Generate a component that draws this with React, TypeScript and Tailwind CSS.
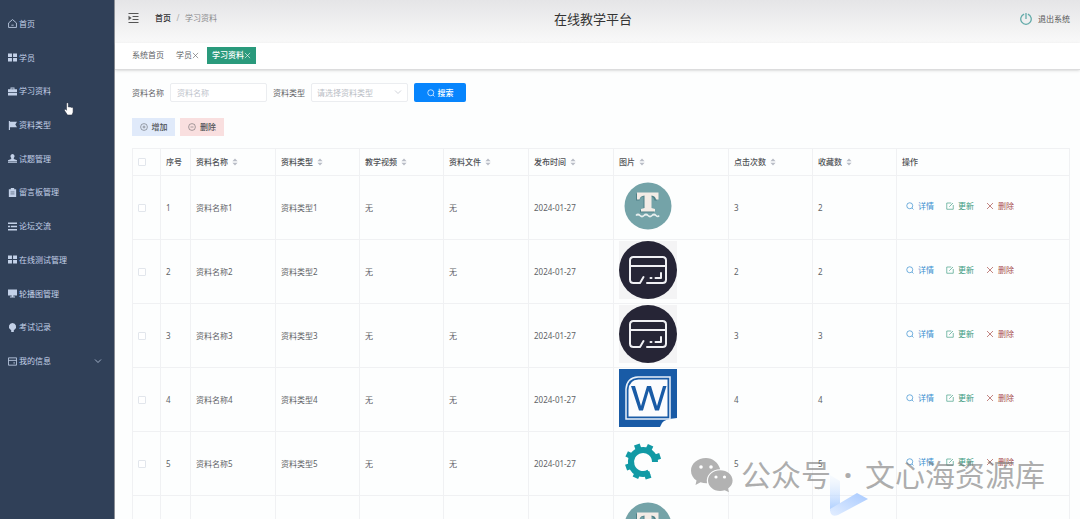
import type { ReactNode } from "react";

const menu = [
  { icon: "home", label: "首页" },
  { icon: "grid", label: "学员" },
  { icon: "case", label: "学习资料" },
  { icon: "flag", label: "资料类型" },
  { icon: "stamp", label: "试题管理" },
  { icon: "clipboard", label: "留言板管理" },
  { icon: "list", label: "论坛交流" },
  { icon: "grid", label: "在线测试管理" },
  { icon: "monitor", label: "轮播图管理" },
  { icon: "bulb", label: "考试记录" },
  { icon: "card", label: "我的信息", open: true },
];

const columns = [
  "资料名称",
  "资料类型",
  "教学视频",
  "资料文件",
  "发布时间",
  "图片",
  "点击次数",
  "收藏数",
];

const rows = [
  { id: 1, clicks: 3, likes: 2, picture: "text" },
  { id: 2, clicks: 2, likes: 2, picture: "card" },
  { id: 3, clicks: 3, likes: 3, picture: "card" },
  { id: 4, clicks: 4, likes: 4, picture: "word" },
  { id: 5, clicks: 5, likes: 5, picture: "gear" },
  { id: 6, clicks: 6, likes: 6, picture: "text" },
];

const shapes: Record<string, ReactNode> = {
  home: (
    <g fill="none" stroke="currentColor" strokeWidth="1.5">
      <path d="M1 7 8 1l7 6v8H1z" strokeLinejoin="round" />
      <path d="M6 11h4" />
    </g>
  ),
  grid: <path d="M0 1h7v6H0zM9 1h7v6H9zM0 9h7v6H0zM9 9h7v6H9z" />,
  case: <path d="M4.500 4V1h7v3H16v5H0V4zm1.500 0h4V2.500H6zM0 10h16v5H0z" />,
  flag: <path d="M1.500 0h2v1.500H16l-3 4.500 3 5H3.500v5h-2z" />,
  stamp: <path d="M8 0a4 4 0 0 1 2.300 7V9l5.700 2v2.500H0V11l5.700-2V7A4 4 0 0 1 8 0zM0 14.500h16V16H0z" />,
  clipboard: (
    <>
      <path d="M1.500 2H5V0h6v2h3.500v14h-13z" />
      <path d="M4.500 7h7M4.500 10.500h7" stroke="#304058" />
    </>
  ),
  list: <path d="M0 1h16v2.500H0zM0 6.800h3.500v2.500H0zM5 6.800h11v2.500H5zM0 12.500h16V15H0z" />,
  monitor: <path d="M0 1h16v10.500H0zM6.500 11.500h3v2H12.500V15h-9v-1.500h3z" />,
  bulb: <path d="M8 0a6.500 6.500 0 0 1 3.800 11.700L10.300 13v3H5.700v-3l-1.500-1.300A6.500 6.500 0 0 1 8 0z" />,
  card: (
    <g fill="none" stroke="currentColor" strokeWidth="1.5">
      <path d="M.800 1.500h14.400v13H.800zM1 6h14M9.500 10.500h3" />
    </g>
  ),
  fold: <path d="M0 0h16v1.500H0zM6.500 4.800H16v1.500H6.500zM6.500 9.700H16v1.500H6.500zM0 14.500h16V16H0zM0 4.500 5 8l-5 3.500z" />,
  down: <path d="m2 5 6 6 6-6" fill="none" stroke="currentColor" strokeWidth="1.5" />,
  search: (
    <g fill="none" stroke="currentColor" strokeWidth="1.4">
      <circle cx="7.500" cy="7.500" r="6" />
      <path d="m12 12 3 3" />
    </g>
  ),
  plus: (
    <g fill="none" stroke="currentColor">
      <circle cx="8" cy="8" r="6.800" />
      <path d="M8 5v6M5 8h6" />
    </g>
  ),
  minus: (
    <g fill="none" stroke="currentColor">
      <circle cx="8" cy="8" r="6.800" />
      <path d="M5 8h6" />
    </g>
  ),
  edit: (
    <g fill="none" stroke="currentColor" strokeWidth="1.3">
      <path d="M10.500 2h-9v12.500h13V6M6.500 9.500l7.500-7.500" />
    </g>
  ),
  close: <path d="m2 2 12 12m0-12L2 14" fill="none" stroke="currentColor" strokeWidth="1.4" />,
  power: (
    <g fill="none" stroke="currentColor" strokeWidth="1.7">
      <path d="M5.500 1.500a7 7 0 1 0 5 0" />
      <path d="M8 0v8" />
    </g>
  ),
};

const Icon = ({ name, className = "size-2" }: { name: string; className?: string }) => (
  <svg viewBox="0 0 16 16" fill="currentColor" aria-hidden="true" className={`shrink-0 ${className}`}>
    {shapes[name]}
  </svg>
);

const SortArrows = () => (
  <svg viewBox="0 0 6 8" fill="#b9bdc6" aria-hidden="true" className="h-2 w-[6px] shrink-0">
    <path d="M3 .500 5.600 3.300H.400zM3 7.500.400 4.700h5.200z" />
  </svg>
);

const teeth = [72, 115, 160, 205, 250, 295, 342];

const pictures: Record<string, ReactNode> = {
  text: (
    <>
      <circle cx="29" cy="29" r="23.500" fill="#74a3a8" />
      <path d="M17 16.500h21v7h-2.500q-.500-3.500-4-4V32l3.500 1v2.500H21V33l3.500-1V19.500q-3.500.500-4 4H17z" fill="#4f8087" />
      <path d="M18 15.500h21.500v7H37q-.500-3.500-4.500-4V31l3.500 1v2.500H22V32l3.500-1V18.500q-4.500.500-5 4H18z" fill="#f3ece6" />
      <path d="M17 38.500q2-2 4 0t4 0 4 0 4 0 4 0 3 0" fill="none" stroke="#e6eeee" strokeWidth="1.700" />
    </>
  ),
  card: (
    <>
      <path d="M0 0h58v58H0z" fill="#f4f4f5" />
      <circle cx="29" cy="29" r="29" fill="#262536" />
      <g fill="none" stroke="#f0f0f4" strokeWidth="2" strokeLinecap="round" strokeLinejoin="round">
        <path d="M21 42h-6.500q-3.500 0-3.500-3.500V19.500q0-3.500 3.500-3.500h29q3.500 0 3.500 3.500v19q0 3.500-3.500 3.500H28M11 25h36M21 42l3.500-6M31.500 37h1M36.500 37H42v-5" />
      </g>
    </>
  ),
  word: (
    <>
      <path d="M0 0h58v49q-13 1-15 5l-2 4H0z" fill="#195ba6" />
      <path d="M7 50V20Q8 8.500 19 8h32v42z" fill="#195ba6" stroke="#e9f1fa" strokeWidth="1.500" />
      <path d="M9.500 47.500V21q.500-10 10-10.500h29v37z" fill="#fbfcfe" />
      <path d="M12 17h4l6 20 6-20h4l6 20 6-20h3.500l-7.500 24.500h-4L29.700 22 24 41.500h-4z" fill="#195ba6" />
    </>
  ),
  gear: (
    <g fill="none" stroke="#129aa5" strokeWidth="6">
      <path d="M30 39.400A12 12 0 1 1 36 29" />
      {teeth.map((angle) => (
        <path key={angle} d="M35 28.500h7" transform={`rotate(${angle} 24 28.500)`} />
      ))}
    </g>
  ),
};

const labels: Record<string, string> = { text: "文本", card: "卡片", word: "文档", gear: "设置" };

const Picture = ({ name }: { name: string }) => (
  <svg viewBox="0 0 58 58" role="img" aria-label={labels[name]} className="mb-1 size-[58px]">
    {pictures[name]}
  </svg>
);

const Check = ({ label }: { label: string }) => (
  <input
    type="checkbox"
    aria-label={label}
    className="block size-2 appearance-none rounded-[1px] border border-[#e2e6ec] bg-white checked:bg-[#0785fd]"
  />
);

const Sidebar = () => (
  <aside className="w-[115px] shrink-0 border-r border-[#8b8f96] bg-[#304058] pt-[7px] text-[#c3d1e8]">
    <nav>
      <ul className="grid h-[371px] auto-rows-fr">
        {menu.map((item) => (
          <li key={item.label}>
            <a href="#" className="flex h-full items-center gap-[2px] pr-3 pl-2">
              <Icon name={item.icon} className="size-[9px]" />
              <span className="grow">{item.label}</span>
              {item.open && <Icon name="down" />}
            </a>
          </li>
        ))}
      </ul>
    </nav>
  </aside>
);

const Header = () => (
  <header className="grid h-[43px] grid-cols-[1fr_auto_1fr] items-center bg-gradient-to-b from-[#e5e5e7] to-[#f9f9f9] pb-2 pr-[10px] pl-[13px]">
    <div className="flex items-center">
      <button type="button" aria-label="折叠菜单" className="mr-4 text-[#555]">
        <Icon name="fold" className="block h-[10px] w-[11px]" />
      </button>
      <a href="#" className="font-medium text-[#303133]">首页</a>
      <span className="w-[14px] text-center text-[#aaa]">/</span>
      <span className="text-[#8a8a8d]">学习资料</span>
    </div>
    <h1 className="pt-[2px] pr-3 text-[13px] text-[#333]">在线教学平台</h1>
    <button type="button" className="flex items-center gap-[6px] justify-self-end pt-[2px] text-[#555]">
      <Icon name="power" className="size-3 text-[#62aaa9]" />
      退出系统
    </button>
  </header>
);

const Tabs = () => (
  <div className="flex h-[27px] items-center border-b border-[#dcdcdd] bg-white px-[17px] pb-[2px] text-[#606266] shadow-sm">
    <button type="button">系统首页</button>
    <button type="button" className="ml-3 flex items-center">
      学员
      <Icon name="close" className="size-[7px]" />
    </button>
    <button type="button" className="ml-2 flex h-[17px] items-center bg-[#2a9a7c] px-[5px] font-medium text-white">
      学习资料
      <Icon name="close" className="size-[7px]" />
    </button>
  </div>
);

const Filters = () => (
  <form className="flex h-[19px] items-center gap-[6px] text-[#606266]">
    <label htmlFor="name">资料名称</label>
    <input
      id="name"
      type="text"
      placeholder="资料名称"
      className="h-full w-[97px] rounded-[2px] border border-[#ebedf0] bg-white px-[6px] placeholder:text-[#c0c4cc]"
    />
    <label htmlFor="type">资料类型</label>
    <div className="relative h-full">
      <select
        id="type"
        className="block h-full w-[97px] appearance-none rounded-[2px] border border-[#ebedf0] bg-white px-[5px] text-[#b9bdc5]"
      >
        <option>请选择资料类型</option>
      </select>
      <Icon name="down" className="pointer-events-none absolute top-[5px] right-[6px] size-2 text-[#c0c4cc]" />
    </div>
    <button
      type="button"
      className="flex h-full w-[52px] items-center justify-center gap-[3px] rounded-[2px] bg-[#0785fd] font-medium text-white"
    >
      <Icon name="search" />
      搜索
    </button>
  </form>
);

const MaterialTable = () => (
  <table className="mt-3 w-full table-fixed border-collapse text-left text-[#606266] [&_td]:border [&_td]:border-[#f0f1f3] [&_td]:px-[5px] [&_th]:border [&_th]:border-[#f0f1f3] [&_th]:px-[5px] [&_th]:font-medium [&_th]:text-[#505256]">
    <colgroup>
      <col className="w-[28px]" />
      <col className="w-[30px]" />
      <col className="w-[85px]" />
      <col className="w-[84px]" />
      <col className="w-[84px]" />
      <col className="w-[85px]" />
      <col className="w-[85px]" />
      <col className="w-[115px]" />
      <col className="w-[84px]" />
      <col className="w-[84px]" />
      <col className="w-[173px]" />
    </colgroup>
    <thead>
      <tr className="h-[27px]">
        <th>
          <Check label="全选" />
        </th>
        <th>序号</th>
        {columns.map((name) => (
          <th key={name}>
            <button type="button" className="flex items-center gap-1">
              {name}
              <SortArrows />
            </button>
          </th>
        ))}
        <th>操作</th>
      </tr>
    </thead>
    <tbody>
      {rows.map((row) => (
        <tr key={row.id} className="h-[64px]">
          <td>
            <Check label={`选择资料${row.id}`} />
          </td>
          <td>{row.id}</td>
          <td>资料名称{row.id}</td>
          <td>资料类型{row.id}</td>
          <td>无</td>
          <td>无</td>
          <td>2024-01-27</td>
          <td>
            <Picture name={row.picture} />
          </td>
          <td>{row.clicks}</td>
          <td>{row.likes}</td>
          <td>
            <div className="flex gap-3 pb-1 pl-1">
              <button type="button" className="flex items-center gap-1 text-[#3a8fd0]">
                <Icon name="search" />
                详情
              </button>
              <button type="button" className="flex items-center gap-1 text-[#3b9a80]">
                <Icon name="edit" />
                更新
              </button>
              <button type="button" className="flex items-center gap-1 text-[#a8504c]">
                <Icon name="close" />
                删除
              </button>
            </div>
          </td>
        </tr>
      ))}
    </tbody>
  </table>
);

const Watermark = () => (
  <div className="pointer-events-none absolute right-[35px] bottom-[22px] flex items-center text-[30px] leading-[44px] text-[#777]/60">
    {/* ribbon under the text */}
    <svg viewBox="0 0 40 42" aria-hidden="true" className="absolute top-[22px] left-[139px] h-[42px] w-10">
      <defs>
        <linearGradient id="bar" x1="0" y1="0" x2="0" y2="1">
          <stop offset="0" stopColor="#e4efff" stopOpacity="0.200" />
          <stop offset="1" stopColor="#a9ccff" />
        </linearGradient>
        <linearGradient id="arm" x1="0" y1="1" x2="1" y2="0">
          <stop offset="0" stopColor="#e3eeff" />
          <stop offset="1" stopColor="#a8caff" />
        </linearGradient>
      </defs>
      <path d="M0 0 10 6v24L0 36z" fill="url(#bar)" />
      <path d="M0 34 27 18l11 6L8 40q-8 3-8-6z" fill="url(#arm)" />
    </svg>
    <svg viewBox="0 0 42 34" aria-hidden="true" className="mr-2 h-[34px] w-[42px]">
      <path
        fill="#b2b2b2"
        d="M15 0C6.500 0 0 5.600 0 12.700c0 4 2.200 7.500 5.500 9.900L4.500 27l5-2.700q3.500 1 6.500.900C14.500 17 21 11.500 29.200 11.300 27.500 4.700 21.500 0 15 0z"
      />
      <path
        fill="#b2b2b2"
        d="M29.200 12.300c-7 0-12.200 4.700-12.200 10.200S22.200 33 29.200 33q2.300 0 4.500-.800l4.300 2-1-3.700c3-2 4.600-4.800 4.600-8 0-5.500-5.400-10.200-12.400-10.200z"
      />
      <g fill="#fff">
        <circle cx="10" cy="9" r="1.800" />
        <circle cx="20" cy="9" r="1.800" />
        <circle cx="25" cy="19" r="1.600" />
        <circle cx="33.500" cy="19" r="1.600" />
      </g>
    </svg>
    <span>公众号</span>
    <span className="w-[34px] text-center font-bold">·</span>
    <span>文心海资源库</span>
  </div>
);

const App = () => {
  return (
    <div className="relative flex h-screen overflow-hidden bg-[#fdfefe] font-['Noto_Sans','Noto_Sans_CJK_SC',sans-serif] text-[8px] leading-3">
      <Sidebar />
      <div className="min-w-0 grow">
        <Header />
        <Tabs />
        <main className="pt-[13px] pr-[11px] pl-[17px]">
          <Filters />
          <div className="mt-4 flex gap-[5px] font-medium text-[#505256]">
            <button type="button" className="flex h-[18px] w-[43px] items-center justify-center gap-1 bg-[#e0eafa]">
              <Icon name="plus" />
              增加
            </button>
            <button type="button" className="flex h-[18px] w-[44px] items-center justify-center gap-1 bg-[#f9dfdf]">
              <Icon name="minus" />
              删除
            </button>
          </div>
          <MaterialTable />
        </main>
      </div>
      <Watermark />
      {/* hand pointer */}
      <svg viewBox="0 0 10 14" aria-hidden="true" className="pointer-events-none absolute top-[102px] left-16 h-[14px] w-[10px]">
        <path
          d="M2.500 1.200q1-1 1.800 0V5q1-.700 1.600.200.900-.600 1.600.300 1-.500 1.600.500v4.200L8 13H3.500L.500 8.500q-.200-1.300 1-1.200l1 1z"
          fill="#fff"
          stroke="#20293a"
          strokeWidth="0.500"
        />
      </svg>
    </div>
  );
};

export default App;
